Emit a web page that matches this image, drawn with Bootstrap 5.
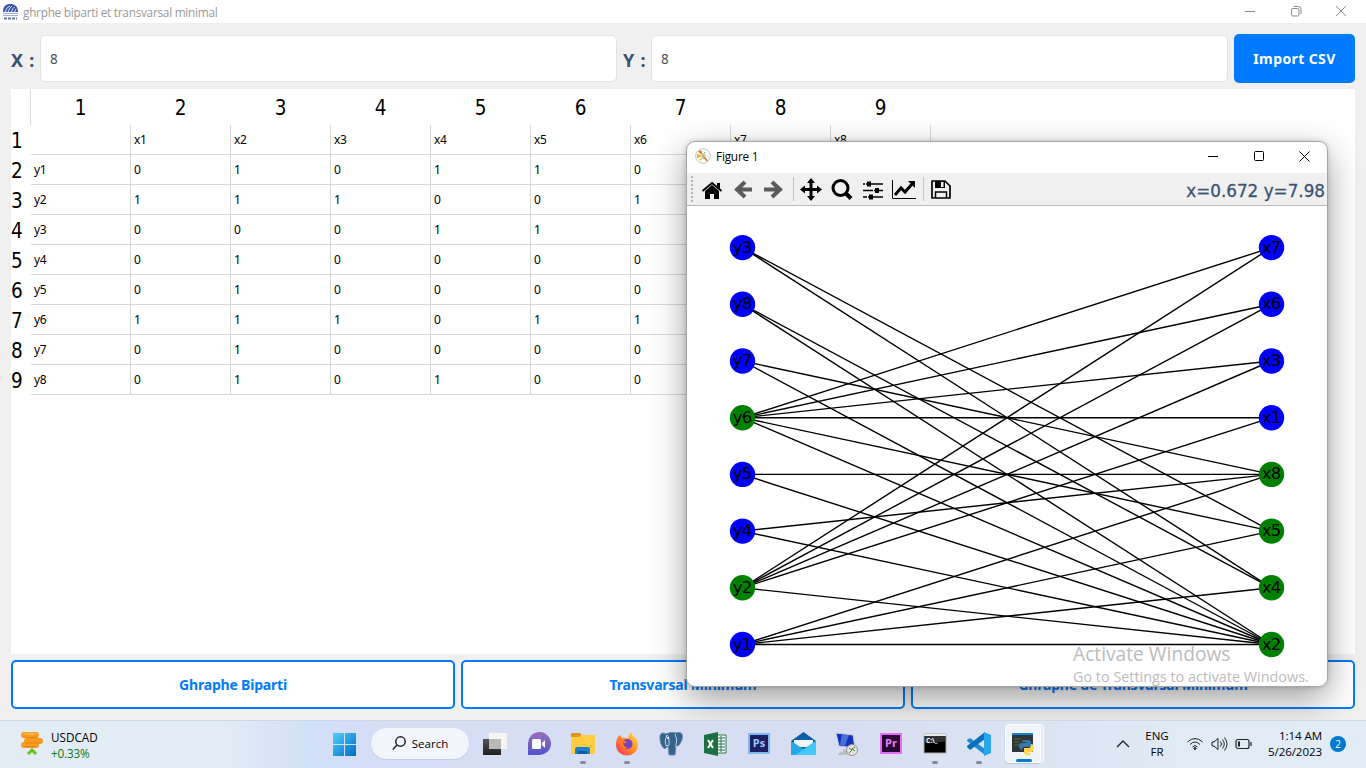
<!DOCTYPE html>
<html lang="fr">
<head>
<meta charset="utf-8">
<title>ghrphe biparti et transvarsal minimal</title>
<meta name="viewport" content="width=device-width, initial-scale=1">
<link href="https://cdn.jsdelivr.net/npm/bootstrap@5.3.0/dist/css/bootstrap.min.css" rel="stylesheet">
<style>
  body { width: 1366px; height: 768px; font-family: "Open Sans", sans-serif; font-size: 12px; line-height: 16px; color: #000; background: #f0f0f0; }
  svg { display: block; flex: none; }
  .app-title { height: 23px; padding-left: 2px; color: #999; }
  .app-title .caption { font-size: 11.8px; letter-spacing: -.26px; }
  .app-title .controls { gap: 33.5px; padding-right: 19px; padding-bottom: 2px; }
  .app-main { height: 697px; padding: 11px 11px 11px; gap: 6px; background: #f0f0f0; }
  .size-row { height: 49px; gap: 6px; }
  .size-row label { font: bold 18px/20px "Noto Sans", sans-serif; word-spacing: 1.5px; color: #3b5274; white-space: pre; padding-top: 2px; }
  .size-row .form-control { height: 47px; border: 1px solid #e0e4e7; border-radius: 5px; padding: 0 9px; font: 13.5px "Noto Sans", sans-serif; color: #495057; background: #fff; width: 577px; flex: none; }
  .btn-main { --bs-btn-border-radius: 5px; font: bold 14px/20px "Noto Sans", sans-serif; letter-spacing: -.2px; padding: 0; height: 49px; }
  .btn-import { width: 121px; background: #007bff; color: #fff; letter-spacing: .4px; }
  .btn-line { border: 2px solid #007bff; color: #007bff; background: #fff; }
  .sheet-panel { height: 565px; background: #fff; }
  .sheet { width: 920px; table-layout: fixed; border-collapse: separate; border-spacing: 0; }
  .sheet col:first-child { width: 20px; }
  .sheet th { font: 20.5px/30px "DejaVu Sans Condensed", "DejaVu Sans", sans-serif; padding: 0; white-space: nowrap; }
  .sheet thead th { height: 36px; text-align: center; padding: 1px 1px 0 0; }
  .sheet thead th:first-child { border-right: 1px solid #dcdcdc; }
  .sheet tbody th { height: 30px; text-align: left; line-height: 28px; padding-top: 2px; }
  .sheet td { height: 30px; padding: 0 3px; border-right: 1px solid #d8d8d8; border-bottom: 1px solid #d8d8d8; font: 12px/28px "Noto Sans", sans-serif; letter-spacing: -.3px; }
  .figure-window { position: absolute; left: 686px; top: 141px; width: 642px; height: 546px; border: 1px solid #a5a5a5; border-radius: 9px; background: #fff; overflow: hidden; }
  .figure-shade { position: absolute; left: 686px; top: 141px; width: 642px; height: 546px; border-radius: 9px; box-shadow: 0 12px 34px 0 rgba(0,0,0,.38), 0 0 5px rgba(0,0,0,.18); }
  .desk { height: 720px; overflow: hidden; position: relative; }
  .figure-title { height: 31px; padding: 0 17px 3px 8px; font-size: 11.8px; letter-spacing: -.2px; }
  .figure-title .controls { gap: 34.5px; }
  .figure-tools { height: 33px; background: #f0f0f0; border-bottom: 1px solid #b9b9b9; padding-right: 2px; }
  .coords { font: 16.8px/20px "DejaVu Sans", sans-serif; color: #3b5274; -webkit-text-stroke: .3px #3b5274; padding-top: 3px; }
  .node-name { font: 16.5px "DejaVu Sans", sans-serif; letter-spacing: -.8px; text-anchor: middle; }
  .activate { position: absolute; left: 1073px; top: 642px; color: #bcbcbc; white-space: nowrap; }
  .activate .head { font-size: 19.2px; line-height: 24px; }
  .activate .hint { font-size: 14.4px; line-height: 21px; }
  .taskbar { height: 48px; padding-bottom: 2px; border-top: 1px solid #ccd8e5; background: linear-gradient(90deg,#e2ecf5 0,#e2ecf6 225px,#d2dff7 310px,#d6def5 480px,#d8def1 850px,#dce4f1 1040px,#e0ebf6 1180px,#e1ecf7 100%); }
  .rates { width: 332px; padding-left: 20px; gap: 7px; }
  .search-pill { width: 98px; height: 31px; margin: 0 4px 0 12px; background: #f2f5fc; box-shadow: 0 1px 1px #c3cce2; gap: 6px; }
  .task-slot { width: 44px; height: 45px; position: relative; }
  .task-slot.running::after { content: ""; position: absolute; left: 19px; bottom: 2px; width: 6px; height: 3px; border-radius: 2px; background: #868a94; }
  .task-slot.active { width: 36px; height: 39px; margin: 0 4px 0 4px; border-radius: 4px; background: #f1f4fb; border: 1px solid #fbfcff; box-shadow: 3px 0 0 -1px #e7ebf5, 3px 0 0 0 #fbfcff, 0 1px 1px #bbc3d4; }
  .task-slot.active::after { left: 10px; bottom: 0; width: 16px; background: #0078d4; }
  .clock { width: 70px; line-height: 16px; letter-spacing: -.1px; font-size: 11.6px; }
  .notice { width: 16px; height: 16px; background: #0078d4; color: #fff; font-size: 10px; }
</style>
</head>
<body class="overflow-hidden">
<div class="desk">
  <header class="app-title bg-white d-flex align-items-center">
    <svg width="17" height="17" viewBox="0 0 17 17"><path d="M1 9C1 2 5 1 8.500 1S16 3 16 9Z" fill="#3653a8"/><path d="M3 9q2-6 5-6M6 9q2-5 4-6M9.500 9q1-4 3-5M12.500 9l1.500-3" stroke="#dfe7fa" fill="none"/><path d="M1 10.500h15M1 12.500h15" stroke="#9eacd2"/><path d="M2 15.500h13" stroke="#6277b4" stroke-width="2" stroke-dasharray="3 1"/></svg>
    <span class="caption ms-1">ghrphe biparti et transvarsal minimal</span>
    <div class="controls d-flex ms-auto align-items-center">
      <svg width="12" height="12" fill="none" stroke="#8b8b8b"><path d="M1 6.500h10"/></svg>
      <svg width="12" height="12" fill="none" stroke="#8b8b8b"><rect x="1.500" y="3.500" width="7.500" height="7.500" rx="1.500"/><path d="M3.500 1.500h5a2.500 2.500 0 0 1 2.500 2.500v5"/></svg>
      <svg width="12" height="12" fill="none" stroke="#8b8b8b"><path d="m1 1 10 10M11 1 1 11"/></svg>
    </div>
  </header>

  <main class="app-main d-flex flex-column">
    <div class="size-row d-flex align-items-center">
      <label for="nx" style="width:23px">X :</label>
      <input id="nx" class="form-control" value="8">
      <label for="ny" style="width:22px">Y :</label>
      <input id="ny" class="form-control" value="8">
      <button class="btn btn-main btn-import flex-shrink-0">Import CSV</button>
    </div>
    <section class="sheet-panel flex-shrink-0">
      <table class="sheet"><colgroup><col><col span="9"></colgroup><thead></thead><tbody></tbody></table>
    </section>
    <div class="d-flex" style="gap:6px">
      <button class="btn btn-main btn-line flex-fill w-100">Ghraphe Biparti</button>
      <button class="btn btn-main btn-line flex-fill w-100">Transvarsal Minimum</button>
      <button class="btn btn-main btn-line flex-fill w-100">Ghraphe de Transvarsal Minimum</button>
    </div>
  </main>

  <div class="figure-shade"></div>
  <section class="figure-window">
    <div class="figure-title d-flex align-items-center">
      <svg width="16" height="16" viewBox="0 0 16 16"><circle cx="8" cy="8" r="7.300" fill="#fff" stroke="#c4c4c4"/><path d="m8 8 4.500 5" stroke="#ef7128" stroke-width="1.600"/><path d="M8 8 2 6v4Z" fill="#f8ae22"/><path d="M8 8 6 2 3 3.500Z" fill="#ef7128"/><path d="M8 8 4 12l2 1Z" fill="#f8cf52"/><path d="m8 8 2-4M8 8l3-.5M8 8v3" stroke="#89c57e" stroke-width="1.200"/></svg>
      <span style="margin-left:5px">Figure 1</span>
      <div class="controls d-flex ms-auto">
        <svg width="11" height="12" fill="none" stroke="#000"><path d="M0 6.500h10"/></svg>
        <svg width="11" height="12" fill="none" stroke="#000"><rect x=".5" y="1.500" width="9" height="9" rx="1"/></svg>
        <svg width="11" height="12" fill="none" stroke="#000"><path d="m.5 1.500 10 10M10.500 1.500l-10 10"/></svg>
      </div>
    </div>
    <div class="figure-tools d-flex align-items-center">
      <svg width="280" height="32" viewBox="0 0 280 32">
        <path d="M5 3v26" stroke="#b5b5b5" stroke-width="2" stroke-dasharray="2 2"/>
        <path d="m15.500 18 9.500-8 9.500 8" fill="none" stroke="#000" stroke-width="2"/><path d="M30 10h3v6l-3-3ZM18 18l7-6 7 6v8h-5v-5h-4v5h-5Z"/>
        <path d="M65 16.500H50m8-7.500-8 7.500 8 7.500" fill="none" stroke="#5b5b5b" stroke-width="4"/>
        <path d="M77 16.500h16m-8-7.500 8 7.500-8 7.500" fill="none" stroke="#5b5b5b" stroke-width="4"/>
        <path d="M106.500 4v24M236.500 4v24" stroke="#c5c5c5"/>
        <path d="M124 8v17M115 16.500h18" stroke="#000" stroke-width="3"/><path d="m124 5 4 5h-8Zm0 23-4-5h8ZM113 16.500l5-4v8Zm22 0-5-4v8Z"/>
        <circle cx="153.500" cy="15" r="7.500" fill="none" stroke="#000" stroke-width="3"/><path d="m159 20.500 5 5" stroke="#000" stroke-width="4"/>
        <path d="M176 11h20M176 17.500h20M176 24h20" stroke="#000" stroke-width="1.500"/><path d="M180 8.500h4v5h-4Zm8 6.500h4v5h-4Zm-6 6.500h4v5h-4Z"/><path d="M178.500 9v4M186.500 15v5M180.500 22v4" stroke="#f0f0f0"/>
        <path d="M205.500 7v18.500H229" fill="none" stroke="#000"/><path d="m208 22 6-7 4 4 8-9" fill="none" stroke="#000" stroke-width="3"/><path d="M221 8h7v7Z"/>
        <path d="M245 8h13l5 5v12h-18Z" fill="none" stroke="#000" stroke-width="1.700" stroke-linejoin="round"/><path d="M248 8h10v7h-10Z"/><path d="M254 9h2.500v5H254Z" fill="#f0f0f0"/><path d="M248.500 25v-6h11v6" fill="none" stroke="#000" stroke-width="1.500"/>
      </svg>
      <span class="coords ms-auto">x=0.672 y=7.98</span>
    </div>
    <svg id="graph" width="640" height="480" viewBox="0 0 640 480"></svg>
  </section>
  <div class="activate"><div class="head">Activate Windows</div><div class="hint">Go to Settings to activate Windows.</div></div>
</div>

<footer class="taskbar d-flex align-items-center">
  <div class="rates d-flex align-items-center">
    <svg width="24" height="25" viewBox="0 0 24 25"><g fill="#f79a20"><rect x="1" y="11" width="18" height="6" rx="3"/><rect x="4" y="7" width="19" height="6" rx="3"/><rect x="1" y="1" width="18" height="6" rx="3"/></g><path d="M3 6.500h15M5 12h15M4 15.500h12" stroke="#e88410"/><path d="M2 3q8-3 16 0-8 2-16 0" fill="#ffb640"/><path d="m8 23 4-4 4 4" fill="none" stroke="#67bf1b" stroke-width="3"/></svg>
    <div style="font-size:11.700px;padding-top:2px"><div>USDCAD</div><div style="color:#087a16;letter-spacing:-.15px">+0.33%</div></div>
  </div>
  <svg width="24" height="24" viewBox="0 0 24 24" style="margin-right:3px"><defs><linearGradient id="win" x2="1" y2="1"><stop stop-color="#4fd0fa"/><stop offset="1" stop-color="#006bc7"/></linearGradient></defs><path d="M1 1h11v11H1Zm12 0h11v11H13ZM1 13h11v11H1Zm12 0h11v11H13Z" fill="url(#win)"/></svg>
  <div class="search-pill rounded-pill d-flex align-items-center justify-content-center">
    <svg width="14" height="15" viewBox="0 0 14 15" fill="none" stroke="#222" stroke-width="1.500"><circle cx="8.500" cy="5.500" r="4.700"/><path d="M5 9 .8 13.500"/></svg><span style="font-size:11.500px">Search</span>
  </div>
  <div class="task-slot d-flex align-items-center justify-content-center"><svg width="24" height="24"><defs><linearGradient id="tv" x2="0" y2="1"><stop stop-color="#555"/><stop offset="1" stop-color="#1f1f1f"/></linearGradient></defs><path d="M0 7h18v16H0Z" fill="url(#tv)"/><path d="M6 1h18v16H6Z" fill="#f5f5f3"/><path d="M6 7h12v10H6Z" fill="#b9b9b9"/></svg></div>
  <div class="task-slot d-flex align-items-center justify-content-center"><svg width="24" height="24"><defs><linearGradient id="chat" x2="0" y2="1"><stop stop-color="#9b70ba"/><stop offset="1" stop-color="#5054c8"/></linearGradient></defs><path d="M1 23V12A11.500 11.500 0 1 1 12 23Z" fill="url(#chat)"/><rect x="5" y="7" width="9" height="10" rx="1.500" fill="#fff"/><path d="m15 11 3-3v8l-3-3Z" fill="#fff"/></svg></div>
  <div class="task-slot running d-flex align-items-center justify-content-center"><svg width="24" height="24"><path d="M0 2q0-1 1-1h8l2 2h-1v4H0Z" fill="#dc9608"/><path d="M0 5h8l2-2h13q1 0 1 1v18H0Z" fill="#ffcc42"/><path d="M4 22v-5q0-2 2-2h11q2 0 2 2v5Z" fill="#1681d0"/><path d="M7 19h9v3H7Z" fill="#075da8"/></svg></div>
  <div class="task-slot running d-flex align-items-center justify-content-center"><svg width="24" height="24"><defs><linearGradient id="fox" x1="1" x2="0" y2="1"><stop stop-color="#ffe64c"/><stop offset=".5" stop-color="#ff8a22"/><stop offset="1" stop-color="#f52c67"/></linearGradient></defs><path d="M5 3 7 6q4-1 6 1 0-4 3-7 1 4 5 6 2 3 2 7a11 10.500 0 1 1-22 0Q1 6 5 3Z" fill="url(#fox)"/><circle cx="12.500" cy="12" r="5" fill="#7445bd"/><path d="M5 9q4-1 7 1-2 2-4 1 1 4 5 5-8 1-9-5Z" fill="#ff7a22"/></svg></div>
  <div class="task-slot d-flex align-items-center justify-content-center"><svg width="24" height="24"><path d="M7 2Q2-1 1 4c-1 5 3 15 6 12l2-2 1 9h6l1-9c3 2 8-8 6-12q-2-3-6-1-5-2-10 1Z" fill="#34638b" stroke="#6d8dab"/><path d="M8 3q-3 5-1 11l3-1V8q0-4-2-5m8-1q3 5 1 11M16 14l6 1" stroke="#c6d5e4" fill="none"/><circle cx="9" cy="6" r="1" fill="#fff"/></svg></div>
  <div class="task-slot d-flex align-items-center justify-content-center"><svg width="24" height="24"><path d="M13 3h10v18H13Z" fill="#fff" stroke="#23774a"/><path d="M14 6h8M14 9h8M14 12h8M14 15h8M14 18h8M18 4v16" stroke="#23774a"/><path d="m1 3 14-3v24L1 21Z" fill="#1d7044"/><path d="m5 8 5 8m0-8-5 8" stroke="#fff" stroke-width="2"/></svg></div>
  <div class="task-slot d-flex align-items-center justify-content-center"><svg width="24" height="24"><rect x="2" y="2" width="20" height="19" fill="#1f1d64" stroke="#80b9ef" stroke-width="2"/><text x="12" y="15" text-anchor="middle" font-size="11" font-weight="700" fill="#9cc9fb">Ps</text></svg></div>
  <div class="task-slot d-flex align-items-center justify-content-center"><svg width="25" height="24"><path d="M0 9 12.500 0 25 9v14H0Z" fill="#0b60a9"/><path d="M3 8h19v7H3Z" fill="#f4f4f4"/><path d="m0 9 12.500 8L25 9v14H0Z" fill="#24a9e6"/><path d="M25 9v14H4Z" fill="#43c7f5"/></svg></div>
  <div class="task-slot d-flex align-items-center justify-content-center"><svg width="24" height="24"><path d="M1 1 18 3l2 13L4 14Z" fill="#1432bb" stroke="#c4cad6"/><path d="m7 2 7 1-4 11-5-1Z" fill="#6797f2" opacity=".6"/><path d="m8 17 5 1v3l3 2H3q0-3 5-3Z" fill="#bcc0c5"/><circle cx="17" cy="18" r="5.500" fill="#e6e6df" stroke="#939891"/><path d="m14 16 3 2-3 3m6-6-3 2 3 2" stroke="#398642" fill="none"/></svg></div>
  <div class="task-slot d-flex align-items-center justify-content-center"><svg width="24" height="24"><rect x="2" y="2" width="20" height="19" fill="#2a0634" stroke="#e66cf7" stroke-width="2"/><text x="12" y="15" text-anchor="middle" font-size="11" font-weight="700" fill="#eb80f7">Pr</text></svg></div>
  <div class="task-slot running d-flex align-items-center justify-content-center"><svg width="24" height="24"><path d="M1 2h22v19H1Z" stroke="#aaa"/><path d="M1 3h22" stroke="#e9e9e9" stroke-width="2"/><path d="M2 11q10 1 20-2v-5H2Z" fill="#333"/><text x="3" y="11" font-size="6.500" font-weight="700" fill="#fff">C:\_</text></svg></div>
  <div class="task-slot running d-flex align-items-center justify-content-center"><svg width="24" height="24"><path d="m0 8 3-2 15 11v6L0 9Z" fill="#1f8bd3"/><path d="m0 15 3 3L18 7V0L0 14Z" fill="#0871b9"/><path d="m17 0 7 3v18l-7 3Z" fill="#29a6ec"/></svg></div>
  <div class="task-slot running active d-flex align-items-center justify-content-center"><svg width="24" height="24"><path d="M1 1h21v19H1Z" fill="#303638"/><path d="M1 1h21v2H1Z" fill="#1282d3"/><path d="M3 7h7M3 10h5M3 13h6" stroke="#486c47"/><path d="M13 8h4q3 0 3 3v4h-7q-2 0-2 3-3-1-3-4t3-3h4v-1h-4q0-2 2-2" fill="#3978ac"/><path d="M20 12q3 0 3 4t-3 4h-3v1h3q0 2-4 2-3 0-3-3v-4h5q2 0 2-4" fill="#ffd647"/></svg></div>
  <div class="d-flex align-items-center ms-auto" style="padding-right:20px">
    <svg width="14" height="10" fill="none" stroke="#222" stroke-width="1.400"><path d="m1 8 6-6 6 6"/></svg>
    <div class="text-center" style="width:32px;margin-left:11px;font-size:11.500px">ENG<br>FR</div>
    <svg width="16" height="14" viewBox="0 0 16 14" style="margin-left:14px" fill="none" stroke="#222"><path d="M.5 5q7.500-7 15 0M3 7.500q5-5 10 0M5.500 10q2.500-3 5 0"/><circle cx="8" cy="11.500" r="1" fill="#222"/></svg>
    <svg width="17" height="14" viewBox="0 0 17 14" style="margin-left:8px" fill="none" stroke="#222"><path d="M1 5v4h2l4 3.500v-11L3 5ZM9.500 4.500q2 2.500 0 5m2-7q3.500 4.500 0 9m2-11q5 6.500 0 13"/></svg>
    <svg width="17" height="12" viewBox="0 0 17 12" style="margin-left:7px" fill="none" stroke="#222" stroke-width="1.200"><rect x="1" y="1.500" width="13" height="9" rx="2"/><path d="M16 4v4"/><path d="M3 3.500h2v5H3Z" fill="#222" stroke="none"/></svg>
    <div class="clock text-end">1:14 AM<br>5/26/2023</div>
    <div class="notice rounded-circle d-flex align-items-center justify-content-center" style="margin-left:8px">2</div>
  </div>
</footer>

<script src="https://cdn.jsdelivr.net/npm/bootstrap@5.3.0/dist/js/bootstrap.bundle.min.js"></script>
<script>
  // Adjacency of the bipartite graph: y vertex -> linked x vertices
  const links = { y1: [2,4,5,8], y2: [1,2,3,6,7], y3: [4,5], y4: [2,8], y5: [2,8], y6: [1,2,3,5,6,7], y7: [2,8], y8: [2,4] };
  const cols = [1,2,3,4,5,6,7,8];
  const cells = list => list.map(v => `<td>${v}</td>`).join('');
  document.querySelector('.sheet thead').innerHTML = '<tr><th></th>' + [...cols, 9].map(n => `<th>${n}</th>`).join('') + '</tr>';
  document.querySelector('.sheet tbody').innerHTML =
    '<tr><th>1</th>' + cells(['', ...cols.map(c => 'x' + c)]) + '</tr>' +
    Object.entries(links).map(([y, xs], i) => `<tr><th>${i + 2}</th>` + cells([y, ...cols.map(c => xs.includes(c) ? 1 : 0)]) + '</tr>').join('');

  const left = ['y3','y8','y7','y6','y5','y4','y2','y1'];
  const right = ['x7','x6','x3','x1','x8','x5','x4','x2'];
  const cover = ['y6','y2','x8','x5','x4','x2'];
  const rowY = i => 41.6 + i * 56.7;
  let out = '';
  for (const [y, xs] of Object.entries(links))
    for (const x of xs)
      out += `<line x1="55.500" y1="${rowY(left.indexOf(y))}" x2="584.500" y2="${rowY(right.indexOf('x' + x))}" stroke="#000" stroke-width="1.400"/>`;
  [[left, 55.5], [right, 584.5]].forEach(([names, x]) => names.forEach((n, i) => {
    out += `<circle cx="${x}" cy="${rowY(i)}" r="12.700" fill="${cover.includes(n) ? '#008000' : '#00f'}"/><text class="node-name" x="${x - .4}" y="${rowY(i) + 5}">${n}</text>`;
  }));
  document.getElementById('graph').innerHTML = out;
</script>
</body>
</html>
